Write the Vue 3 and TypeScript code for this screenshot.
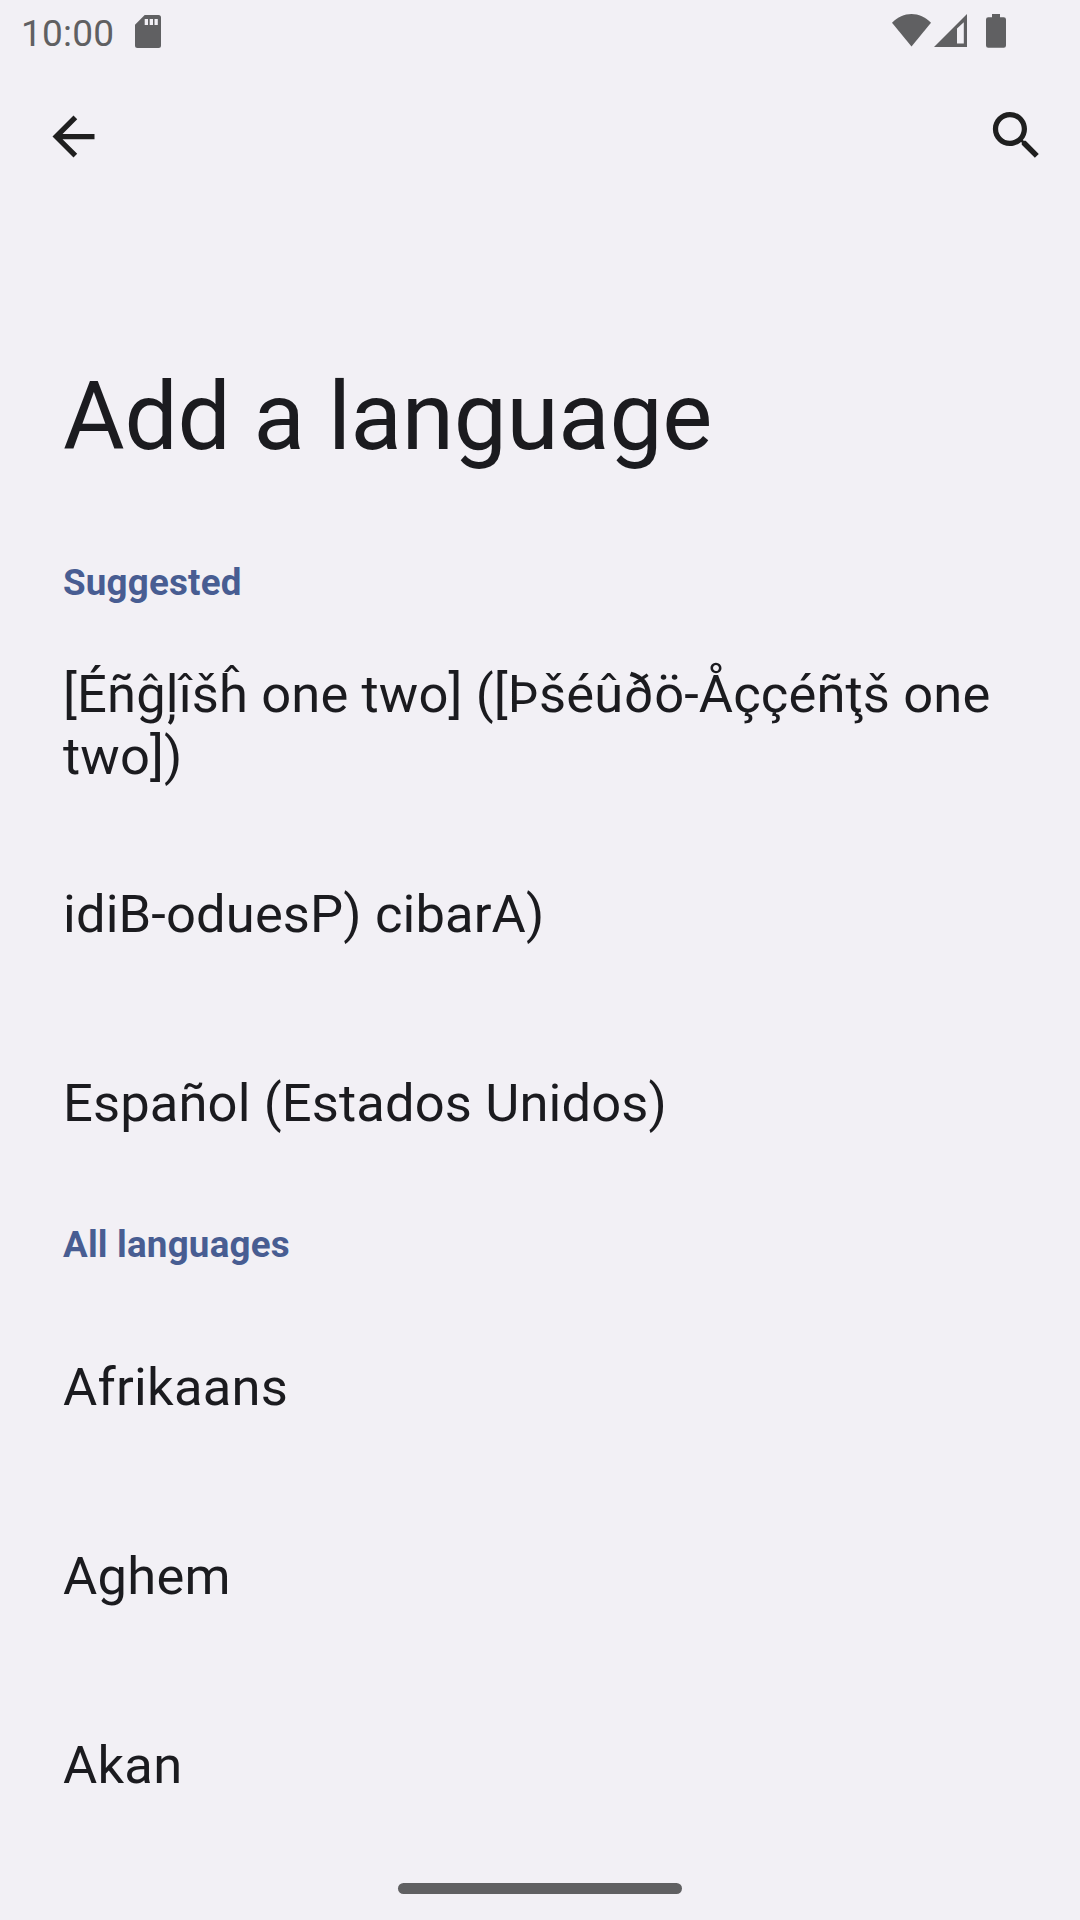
<script setup lang="ts">
interface Item { name: string; lines?: number }
const suggested: Item[] = [
  { name: '[Éñĝļîšĥ one two] ([Þšéûðö-Åççéñţš one two])', lines: 2 },
  { name: 'idiB-oduesP) cibarA)' },
  { name: 'Español (Estados Unidos)' },
]
const all: Item[] = [{ name: 'Afrikaans' }, { name: 'Aghem' }, { name: 'Akan' }]
</script>

<template>
  <div class="screen">
    <header class="status">
      <span class="clock">10:00</span>
      <svg class="sd" width="26" height="33" viewBox="0 0 26 33"><path fill="#606062" fill-rule="evenodd" d="M9.700 0H23.500a2.500 2.500 0 0 1 2.500 2.500V30.500a2.500 2.500 0 0 1-2.500 2.500H2.500a2.500 2.500 0 0 1-2.500-2.500V9.700ZM9.700 4v6h3.300V4ZM14.700 4v6h3.300V4ZM19.500 4v6h3.300V4Z" /></svg>
      <svg class="signals" width="114" height="34" viewBox="0 0 114 34">
        <path fill="#606062" d="M0 8.800C11-2.900 28-2.900 39 8.800L19.500 32.500Z" />
        <path fill="#606062" fill-rule="evenodd" d="M75 0V33H42ZM71.800 8.200L65 14.600V29.500H71.800Z" />
        <path fill="#606062" d="M100 0h8v3.300h3.700a2.300 2.300 0 0 1 2.300 2.300V31.500a2.300 2.300 0 0 1-2.300 2.300H96.300a2.300 2.300 0 0 1-2.300-2.300V5.600a2.300 2.300 0 0 1 2.300-2.300h3.700Z" />
      </svg>
    </header>
    <nav class="bar">
      <svg width="63" height="63" viewBox="0 0 24 24"><path fill="#1f1f1f" d="M20 11H7.830l5.590-5.590L12 4l-8 8 8 8 1.410-1.410L7.830 13H20v-2z" /></svg>
      <svg class="search" width="63" height="63" viewBox="0 0 24 24"><path fill="#1f1f1f" d="M15.500 14h-.79l-.28-.27C15.410 12.590 16 11.110 16 9.500 16 5.910 13.090 3 9.500 3S3 5.910 3 9.500 5.910 16 9.500 16c1.610 0 3.090-.59 4.230-1.570l.27.28v.79l5 4.990L20.490 19l-4.990-5zm-6 0C7.010 14 5 11.990 5 9.500S7.010 5 9.500 5 14 7.010 14 9.500 11.990 14 9.500 14z" /></svg>
    </nav>
    <h1>Add a language</h1>
    <h2 class="first">Suggested</h2>
    <ul>
      <li v-for="item in suggested" :key="item.name" :class="{ tall: item.lines === 2 }">{{ item.name }}</li>
    </ul>
    <h2 class="second">All languages</h2>
    <ul class="all">
      <li v-for="item in all" :key="item.name">{{ item.name }}</li>
    </ul>
    <footer><span class="handle"></span></footer>
  </div>
</template>

<style>
body { margin: 0; background: #f2f0f5; }
</style>
<style scoped>
.screen { width: 1080px; height: 1920px; background: #f2f0f5; color: #1b1b1f; font-family: Roboto, sans-serif; display: flex; flex-direction: column; overflow: hidden; }
.status { height: 66px; display: flex; align-items: flex-start; padding: 14px 74px 0 21px; box-sizing: border-box; flex: none; }
.clock { font-size: 37px; line-height: 39px; letter-spacing: 0.200px; color: #606062; width: 92px; white-space: nowrap; }
.sd { margin: 1px 0 0 22px; }
.signals { margin-left: auto; }
.bar { height: 147px; flex: none; display: flex; justify-content: space-between; padding: 39px 32px 0 42px; box-sizing: border-box; }
.search { margin-top: -1px; }
h1 { margin: 146px 0 0 63px; font-size: 94.500px; line-height: 116px; font-weight: 400; letter-spacing: -0.270px; flex: none; white-space: nowrap; }
h2 { margin: 0; padding-left: 63px; color: #485d92; font-size: 36.750px; line-height: 44px; font-weight: 700; letter-spacing: 0.200px; flex: none; }
.first { margin-top: 86px; }
.second { margin-top: 26px; }
ul { list-style: none; margin: 0; padding: 0; flex: none; }
li { height: 189px; padding: 0 63px; display: flex; align-items: center; font-size: 52.500px; line-height: 62px; letter-spacing: 0.130px; box-sizing: border-box; }
.tall { height: 214px; padding-top: 26px; }
.all { margin-top: 25px; }
.all li { letter-spacing: 0.250px; }
footer { margin-top: auto; height: 37px; display: flex; justify-content: center; flex: none; }
.handle { width: 284px; height: 11px; border-radius: 6px; background: #606062; }
</style>
